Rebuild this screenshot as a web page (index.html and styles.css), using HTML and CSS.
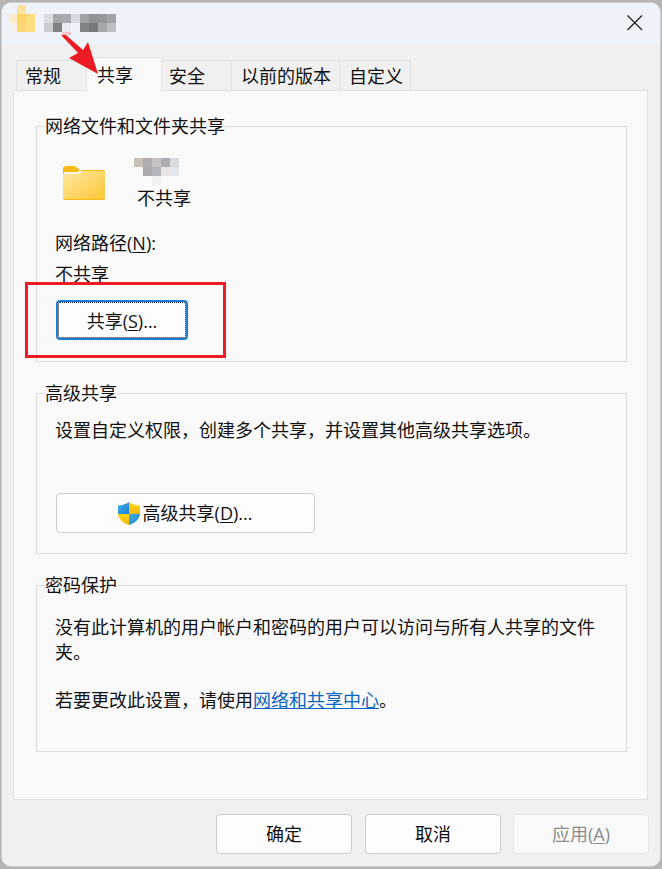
FILE: index.html
```html
<!DOCTYPE html>
<html lang="zh-CN">
<head>
<meta charset="utf-8">
<title>属性</title>
<link rel="stylesheet" href="styles.css">
</head>
<body>
<div class="window">
  <header class="titlebar">
    <svg class="title-icon" width="112" height="34" viewBox="0 0 112 34">
      <rect x="0" y="9" width="8" height="9" fill="#fbeec8"/>
      <rect x="8" y="0" width="9" height="9" fill="#fde3a0"/>
      <rect x="8" y="9" width="9" height="9" fill="#fcd469"/>
      <rect x="17" y="9" width="9" height="9" fill="#fedd7e"/>
      <rect x="17" y="18" width="9" height="9" fill="#fedd7e"/>
      <rect x="8" y="18" width="9" height="9" fill="#fdd774"/>
      <rect x="0" y="18" width="8" height="9" fill="#f3f2ec"/>
      <rect x="35" y="9" width="9" height="9" fill="#d9dde3"/>
      <rect x="44" y="9" width="9" height="9" fill="#a5a9ad"/>
      <rect x="53" y="9" width="9" height="9" fill="#a8acb0"/>
      <rect x="62" y="9" width="9" height="9" fill="#d8dce2"/>
      <rect x="71" y="9" width="9" height="9" fill="#9fa3a7"/>
      <rect x="80" y="9" width="9" height="9" fill="#8f9398"/>
      <rect x="89" y="9" width="9" height="9" fill="#94989d"/>
      <rect x="98" y="9" width="9" height="9" fill="#a0a4a8"/>
      <rect x="35" y="18" width="9" height="9" fill="#c9ccd2"/>
      <rect x="44" y="18" width="9" height="9" fill="#7d8084"/>
      <rect x="53" y="18" width="9" height="9" fill="#e8ebf0"/>
      <rect x="71" y="18" width="9" height="9" fill="#7e8185"/>
      <rect x="80" y="18" width="9" height="9" fill="#76797d"/>
      <rect x="89" y="18" width="9" height="9" fill="#a4a8ac"/>
      <rect x="98" y="18" width="9" height="9" fill="#bcc0c5"/>
    </svg>
    <button class="close" aria-label="关闭">
      <svg width="16" height="16" viewBox="0 0 16 16"><path d="M0.5 0.500L15 15M15 0.500L0.500 15" fill="none" stroke="#1c1c1c" stroke-width="1.2"/></svg>
    </button>
  </header>

  <nav class="tabs">
    <span class="tab tab-general">常规</span>
    <span class="tab tab-active">共享</span>
    <span class="tab tab-security">安全</span>
    <span class="tab tab-previous">以前的版本</span>
    <span class="tab tab-custom">自定义</span>
  </nav>

  <main class="panel">
    <fieldset class="group group-network">
      <legend>网络文件和文件夹共享</legend>
      <div class="share-item">
        <svg class="folder" width="44" height="36" viewBox="0 0 44 36">
          <defs>
            <linearGradient id="folderFront" x1="0" y1="0" x2="1" y2="1">
              <stop offset="0" stop-color="#ffe7a0"/>
              <stop offset="1" stop-color="#fdc737"/>
            </linearGradient>
          </defs>
          <path d="M1 5a3 3 0 0 1 3-3h9l5 4h23a2 2 0 0 1 2 2v26a2 2 0 0 1-2 2H3a2 2 0 0 1-2-2z" fill="#fdb913"/>
          <path d="M1 10h15l3-3h22a2 2 0 0 1 2 2v24a2 2 0 0 1-2 2H3a2 2 0 0 1-2-2z" fill="url(#folderFront)"/>
          <path d="M2 9h14l3-2.500" fill="none" stroke="#fff8e6" stroke-width="2"/>
        </svg>
        <div class="share-name">
          <svg class="blur-name" width="46" height="27" viewBox="0 0 46 27">
            <rect x="0" y="0" width="9" height="9" fill="#c9c0b6"/>
            <rect x="9" y="0" width="9" height="9" fill="#aeabb2"/>
            <rect x="18" y="0" width="9" height="9" fill="#c8c3c2"/>
            <rect x="27" y="0" width="9" height="9" fill="#aeabb4"/>
            <rect x="36" y="0" width="9" height="9" fill="#d6dbdf"/>
            <rect x="9" y="9" width="9" height="9" fill="#aca6ad"/>
            <rect x="18" y="9" width="9" height="9" fill="#b2b5bb"/>
            <rect x="27" y="9" width="9" height="9" fill="#ebe4e2"/>
            <rect x="36" y="9" width="9" height="9" fill="#e3e6ea"/>
            <rect x="18" y="18" width="9" height="9" fill="#eeefee"/>
          </svg>
          <span class="share-status">不共享</span>
        </div>
      </div>
      <p class="path-label">网络路径(<u>N</u>):</p>
      <p class="path-value">不共享</p>
      <button class="btn btn-share">共享(<u>S</u>)...</button>
    </fieldset>

    <fieldset class="group group-advanced">
      <legend>高级共享</legend>
      <p class="desc">设置自定义权限，创建多个共享，并设置其他高级共享选项。</p>
      <button class="btn btn-advanced">
        <svg class="shield" width="24" height="24" viewBox="0 0 24 24">
          <defs>
            <linearGradient id="shieldBlue" x1="0" y1="0" x2="1" y2="1">
              <stop offset="0" stop-color="#3fb0ef"/>
              <stop offset="1" stop-color="#1c7fd0"/>
            </linearGradient>
            <linearGradient id="shieldGold" x1="0" y1="0" x2="0" y2="1">
              <stop offset="0" stop-color="#ffd60f"/>
              <stop offset="1" stop-color="#f8b70a"/>
            </linearGradient>
          </defs>
          <path d="M11 0C8 2 4 3.500 0 3.500V12H11z" fill="url(#shieldBlue)"/>
          <path d="M11 0c3 2 7 3.500 11 3.500V12H11z" fill="url(#shieldGold)"/>
          <path d="M0 12H11v11C5 21 .5 17 0 12z" fill="url(#shieldGold)"/>
          <path d="M22 12H11v11c6-2 10.500-6 11-11z" fill="url(#shieldBlue)"/>
        </svg>高级共享(<u>D</u>)...
      </button>
    </fieldset>

    <fieldset class="group group-password">
      <legend>密码保护</legend>
      <p class="desc desc-wrap">没有此计算机的用户帐户和密码的用户可以访问与所有人共享的文件夹。</p>
      <p class="desc desc-link">若要更改此设置，请使用<a href="#">网络和共享中心</a>。</p>
    </fieldset>
  </main>

  <footer class="actions">
    <button class="btn btn-foot">确定</button>
    <button class="btn btn-foot">取消</button>
    <button class="btn btn-foot btn-disabled" disabled>应用(<u>A</u>)</button>
  </footer>
</div>

<div class="mark-box"></div>
<svg class="mark-arrow" width="40" height="44" viewBox="0 0 40 44">
  <rect x="2" y="0" width="9" height="3" fill="#f5c3cc"/>
  <path d="M1 3H6L23 18L28 10L38 42L9 26L18 21Z" fill="#ed1c24"/>
</svg>
</body>
</html>
```
FILE: styles.css
```css
* { box-sizing: border-box; }
html, body { margin: 0; height: 100%; }
body {
  position: relative;
  background: #b4b4b4;
  font-family: "Open Sans", "Noto Sans CJK SC", sans-serif;
  font-size: 18px;
  color: #111;
  overflow: hidden;
}
p { margin: 0; line-height: 25px; }
u { text-underline-offset: 2px; }

.window {
  margin: 2px 1px 2px 1px;
  height: 865px;
  background: #f0f0f0;
  border-radius: 10px;
  border: 1px solid #cfcfcf;
  overflow: hidden;
  display: flex;
  flex-direction: column;
}
.titlebar {
  height: 42px;
  flex: none;
  background: #eef3f9;
  display: flex;
  justify-content: space-between;
  align-items: flex-start;
  padding: 2px 17px 0 7px;
}
.title-icon { display: block; }
.close {
  border: 0;
  background: none;
  padding: 0;
  margin-top: 10px;
  width: 16px;
  height: 16px;
  display: block;
}
.close svg { display: block; }

.tabs {
  display: flex;
  align-items: flex-end;
  height: 45px;
  flex: none;
  padding-left: 14px;
}
.tab {
  height: 30px;
  line-height: 31px;
  background: #f0f0f0;
  border: 1px solid #e2e2e2;
  border-bottom: 0;
}
.tab-general { width: 70px; border-right: 0; padding-left: 8px; }
.tab-active {
  width: 76px;
  height: 34px;
  line-height: 34px;
  padding-left: 10px;
  background: #f9f9f9;
  position: relative;
  top: 1px;
  z-index: 1;
}
.tab-security { width: 69px; border-left: 0; border-right: 0; padding-left: 7px; }
.tab-previous { width: 109px; padding-left: 9px; }
.tab-custom { width: 71px; border-left: 0; padding-left: 9px; }

.panel {
  margin-left: 11px;
  width: 635px;
  height: 710px;
  flex: none;
  background: #f9f9f9;
  border: 1px solid #e2e2e2;
  padding: 23px 20px 0 22px;
}
.group {
  margin: 0;
  padding: 0 0 0 18px;
  border: 1px solid #dcdcdc;
  min-width: 0;
  display: block;
}
.group legend {
  padding: 0;
  margin-left: -10px;
  background: #f9f9f9;
  line-height: 24px;
}
.group-network { height: 248px; }
.group-advanced { height: 173px; margin-top: 19px; }
.group-password { height: 179px; margin-top: 19px; }

.share-item { display: flex; margin-top: 20px; }
.folder { margin: 6px 0 0 7px; flex: none; }
.share-name { margin-left: 28px; display: flex; flex-direction: column; }
.blur-name { display: block; }
.share-status { margin: 0 0 0 3px; line-height: 26px; }
.path-label { margin-top: 20px; }
.path-value { margin-top: 6px; }

.btn {
  display: block;
  font: inherit;
  color: inherit;
  background: #fdfdfd;
  border: 1px solid #cdcdcd;
  border-radius: 4px;
  padding: 0 0 2px;
  text-align: center;
}
.btn-share {
  width: 132px;
  height: 40px;
  margin: 13px 0 0 1px;
  padding-bottom: 1px;
  border: 2px solid #1a7fd2;
  outline: 1px dotted #111;
  outline-offset: -3px;
}
.btn-advanced {
  width: 259px;
  height: 40px;
  margin: 50px 0 0 1px;
}
.shield { vertical-align: -6px; margin: 0 1px 0 -1px; }
.desc { margin-top: 13px; }
.desc-wrap { width: 555px; margin-top: 18px; }
.desc-link { margin-top: 23px; }
.desc-link a { color: #0a66c2; }

.actions {
  flex: 1;
  display: flex;
  justify-content: flex-end;
  gap: 13px;
  padding: 14px 11px 0 0;
}
.btn-foot { width: 136px; height: 40px; }
.btn-disabled {
  margin-left: -1px;
  background: #f9f9f9;
  border-color: #e6e6e6;
  color: #8c8c8c;
}

.mark-box {
  position: absolute;
  left: 25px;
  top: 282px;
  width: 201px;
  height: 76px;
  border: 3px solid #ed1c24;
}
.mark-arrow {
  position: absolute;
  left: 60px;
  top: 32px;
  z-index: 2;
}
```
